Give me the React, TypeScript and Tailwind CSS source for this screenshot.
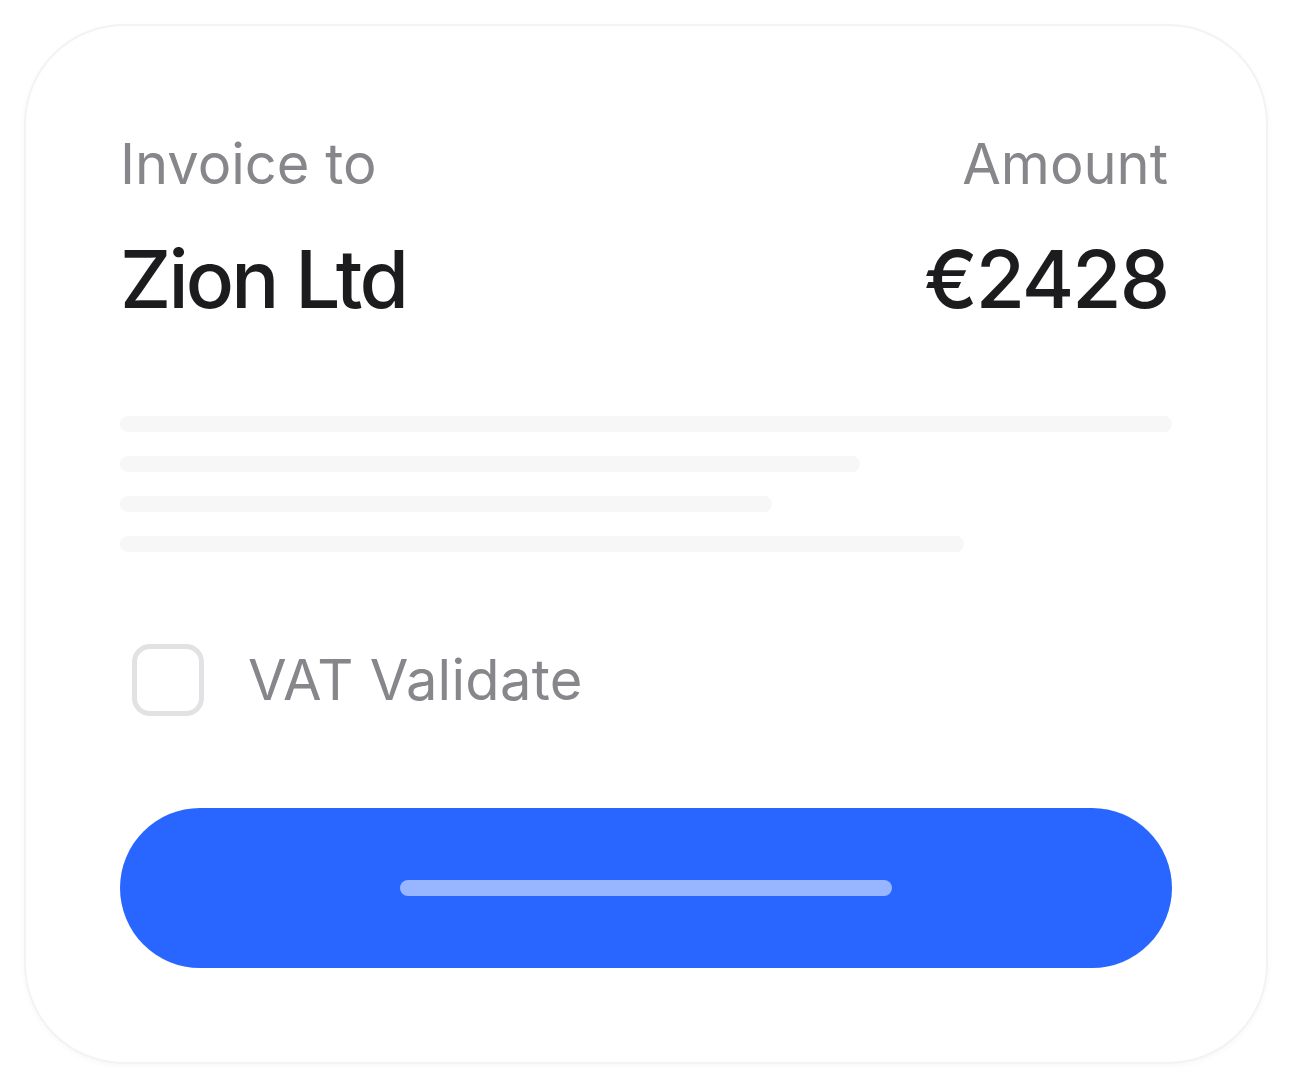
export default function App() {
  const lines = ['w-full', 'w-[740px]', 'w-[652px]', 'w-[844px]']

  return (
    <div className="min-h-screen bg-white p-6 font-['Inter',sans-serif]">
      <div className="w-[1244px] h-[1040px] rounded-[100px] border-2 border-[#f3f3f3] bg-white shadow-[0_2px_6px_rgba(0,0,0,0.03)] px-[94px] pt-[110px] pb-[94px] flex flex-col">
        {/* Header */}
        <div className="flex justify-between">
          <div className="flex flex-col gap-[47px]">
            <span className="text-[56px] leading-none text-[#86868b]">Invoice to</span>
            <span className="text-[80px] leading-none font-medium text-[#1c1c1e] tracking-[-2.8px]">Zion Ltd</span>
          </div>
          <div className="flex flex-col items-end gap-[47px]">
            <span className="text-[56px] leading-none text-[#86868b] mr-[4px]">Amount</span>
            <span className="text-[80px] leading-none font-medium text-[#1c1c1e] tracking-[-2px] mr-[4px]">€2428</span>
          </div>
        </div>

        {/* Placeholder lines */}
        <div className="mt-[97px] flex flex-col gap-6">
          {lines.map((w, i) => (
            <div key={i} className={`${w} h-4 rounded-full bg-[#f7f7f7]`} />
          ))}
        </div>

        {/* Checkbox */}
        <label className="mt-[92px] ml-3 flex items-center gap-[44px]">
          <span className="w-[72px] h-[72px] rounded-[18px] border-[5px] border-[#e2e2e4]" />
          <span className="text-[56px] leading-none text-[#86868b] tracking-[0.3px]">VAT Validate</span>
        </label>

        {/* Button */}
        <button className="mt-[92px] h-40 w-full rounded-full bg-[#2966ff] flex items-center justify-center">
          <span className="w-[492px] h-4 rounded-full bg-[#98b5ff]" />
        </button>
      </div>
    </div>
  )
}
